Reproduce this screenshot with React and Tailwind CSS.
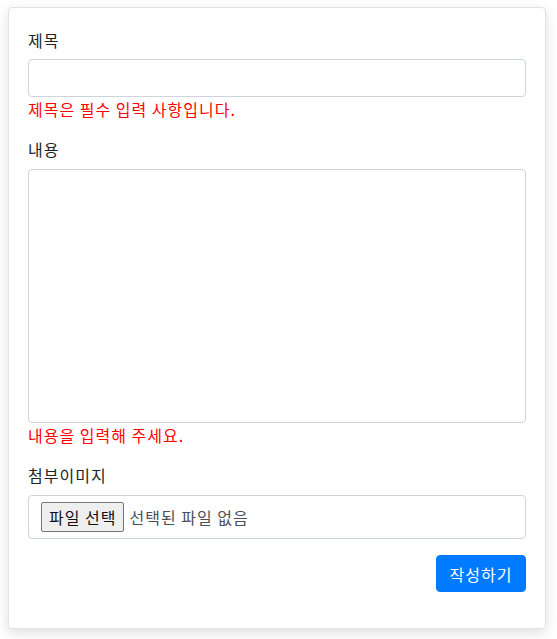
export default function App() {
  const font = { fontFamily: '"Noto Sans CJK KR", "Noto Sans", sans-serif' };
  return (
    <div className="min-h-[639px] bg-white pl-[8px] pt-[7px]" style={font}>
      <div className="w-[538px] h-[622px] rounded-[4px] border border-[#e3e3e3] bg-white px-[19px] pt-[20px] shadow-[0_4px_12px_rgba(0,0,0,0.13)] text-[16px] leading-[24px] tracking-[1px] text-[#212529]">
        <div className="mb-[16px]">
          <div className="mb-[7px]">제목</div>
          <input className="block h-[38px] w-full rounded-[4px] border border-[#ced4da] bg-white px-3 outline-none" />
          <div className="text-[#ff0000]">제목은 필수 입력 사항입니다.</div>
        </div>
        <div className="mb-[16px]">
          <div className="mb-[8px]">내용</div>
          <textarea className="block h-[254px] w-full resize-none rounded-[4px] border border-[#ced4da] bg-white px-3 outline-none" />
          <div className="text-[#ff0000]">내용을 입력해 주세요.</div>
        </div>
        <div className="mb-[16px]">
          <div className="mb-[8px]">첨부이미지</div>
          <div className="flex h-[44px] w-full items-center rounded-[4px] border border-[#ced4da] bg-white pl-[12px]">
            <div className="flex h-[30px] items-center rounded-[2px] border border-[#767676] bg-[#efefef] px-[7px] text-[16px] text-[#111]">
              파일 선택
            </div>
            <span className="ml-[5px] text-[#495057]">선택된 파일 없음</span>
          </div>
        </div>
        <div className="flex justify-end">
          <button className="flex h-[37px] w-[90px] items-center justify-center rounded-[4px] border border-[#007bff] bg-[#007bff] text-white tracking-[1px]">
            작성하기
          </button>
        </div>
      </div>
    </div>
  );
}
